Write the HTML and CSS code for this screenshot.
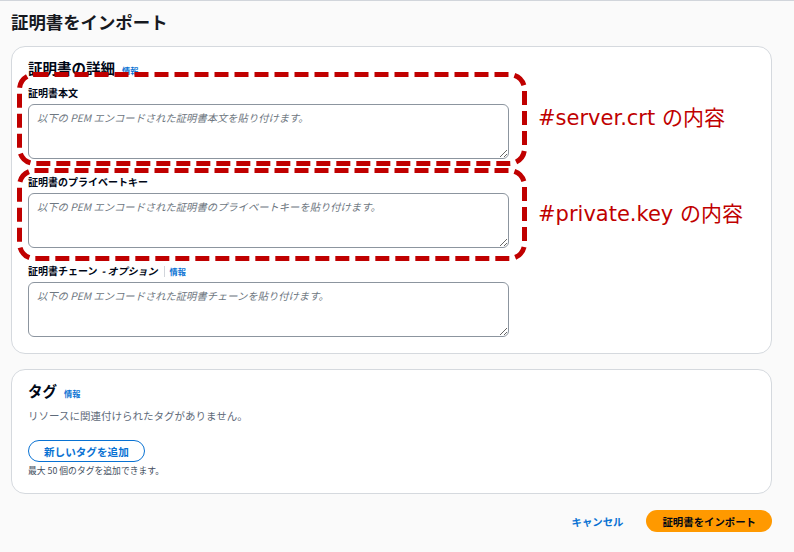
FILE: index.html
```html
<!DOCTYPE html>
<html lang="ja">
<head>
    <meta charset="UTF-8">
    <meta name="viewport" content="width=device-width, initial-scale=1.0">
    <title>証明書をインポート</title>
    <link rel="stylesheet" href="styles.css">
</head>
<body>
    <div class="page">
        <h1 class="page-title">証明書をインポート</h1>

        <div class="card">
            <h2 class="card-title">証明書の詳細 <a class="info" href="#">情報</a></h2>

            <div class="field">
                <label class="field-label" for="cert-body">証明書本文</label>
                <textarea id="cert-body" placeholder="以下の PEM エンコードされた証明書本文を貼り付けます。"></textarea>
            </div>

            <div class="field">
                <label class="field-label" for="cert-key">証明書のプライベートキー</label>
                <textarea id="cert-key" placeholder="以下の PEM エンコードされた証明書のプライベートキーを貼り付けます。"></textarea>
            </div>

            <div class="field">
                <label class="field-label" for="cert-chain">証明書チェーン <i>- オプション</i><span class="divider"></span><a class="info" href="#">情報</a></label>
                <textarea id="cert-chain" placeholder="以下の PEM エンコードされた証明書チェーンを貼り付けます。"></textarea>
            </div>

            <svg class="mark mark-body" width="510" height="94">
                <rect x="2.5" y="2.5" width="505" height="89" rx="15" />
            </svg>
            <svg class="mark mark-key" width="510" height="93">
                <rect x="2.5" y="2.5" width="505" height="88" rx="15" />
            </svg>
            <div class="note note-body">#server.crt の内容</div>
            <div class="note note-key">#private.key の内容</div>
        </div>

        <div class="card">
            <h2 class="card-title">タグ <a class="info" href="#">情報</a></h2>
            <p class="empty">リソースに関連付けられたタグがありません。</p>
            <button class="btn-outline">新しいタグを追加</button>
            <p class="hint">最大 50 個のタグを追加できます。</p>
        </div>

        <div class="actions">
            <a class="cancel" href="#">キャンセル</a>
            <button class="btn-primary">証明書をインポート</button>
        </div>
    </div>
</body>
</html>
```

FILE: styles.css
```css
body {
    margin: 0;
    padding: 0;
    font-family: "Noto Sans CJK JP", "Noto Sans", sans-serif;
    background: #fafafa;
    color: #000716;
    border-top: 1px solid #d1d5db;
}

.page {
    padding: 0 22px 0 11px;
}

.page-title {
    margin: 0;
    padding: 8px 0 0;
    font-size: 17.4px;
    line-height: 26px;
    font-weight: 700;
    color: #16191f;
}

.card {
    position: relative;
    margin-top: 11px;
    background: #fff;
    border: 1px solid #d5d9de;
    border-radius: 14px;
    padding: 12px 16px 16px;
}

.card + .card {
    margin-top: 15px;
}

.card-title {
    margin: 0;
    display: flex;
    align-items: baseline;
    gap: 7px;
    font-size: 14.5px;
    line-height: 18px;
    font-weight: 700;
}

.info {
    font-size: 8.2px;
    line-height: 1;
    font-weight: 700;
    color: #0972d3;
    text-decoration: none;
}

.field {
    display: flex;
    flex-direction: column;
    margin-top: 16px;
}

.field:first-of-type {
    margin-top: 9px;
}

.field-label {
    font-size: 10px;
    line-height: 14px;
    font-weight: 700;
    margin-bottom: 4px;
    display: flex;
    align-items: center;
}

.field-label i {
    margin-left: 4px;
}

.field-label .divider {
    width: 1px;
    height: 11px;
    background: #d1d5db;
    margin: 0 4px 0 7px;
}

.field:last-of-type .field-label {
    margin-bottom: 5px;
}

textarea {
    box-sizing: border-box;
    width: 481px;
    height: 55px;
    border: 1px solid #8c959f;
    border-radius: 6px;
    padding: 5px 8px;
    font-family: inherit;
    font-size: 10.3px;
    background: #fff;
}

textarea::placeholder {
    color: #6e7781;
    font-style: italic;
}

.mark {
    position: absolute;
    left: 5px;
}

.mark rect {
    fill: none;
    stroke: #c00000;
    stroke-width: 5;
    stroke-dasharray: 14 6;
}

.mark-body {
    top: 25px;
}

.mark-key {
    top: 121px;
}

.note {
    position: absolute;
    left: 526px;
    font-family: "DejaVu Sans", "Noto Sans CJK JP", sans-serif;
    font-size: 21px;
    line-height: 26px;
    color: #c00000;
}

.note-body {
    top: 58px;
}

.note-key {
    top: 154px;
}

.empty {
    margin: 9px 0 0;
    font-size: 10.5px;
    line-height: 14px;
    color: #5f6b7a;
}

.btn-outline {
    margin-top: 17px;
    height: 22px;
    padding: 0 15px;
    border: 1.5px solid #0972d3;
    border-radius: 11px;
    background: #fff;
    color: #0972d3;
    font-family: inherit;
    font-size: 10.6px;
    font-weight: 700;
}

.hint {
    margin: 3px 0 0;
    font-size: 8.8px;
    line-height: 12px;
    color: #414d5c;
}

.actions {
    display: flex;
    justify-content: flex-end;
    align-items: center;
    gap: 23px;
    margin-top: 16px;
}

.cancel {
    font-size: 10.4px;
    font-weight: 700;
    color: #0972d3;
    text-decoration: none;
}

.btn-primary {
    height: 22px;
    padding: 0 16px;
    border: none;
    border-radius: 11px;
    background: #ff9900;
    color: #000716;
    font-family: inherit;
    font-size: 10.4px;
    font-weight: 700;
}
```
